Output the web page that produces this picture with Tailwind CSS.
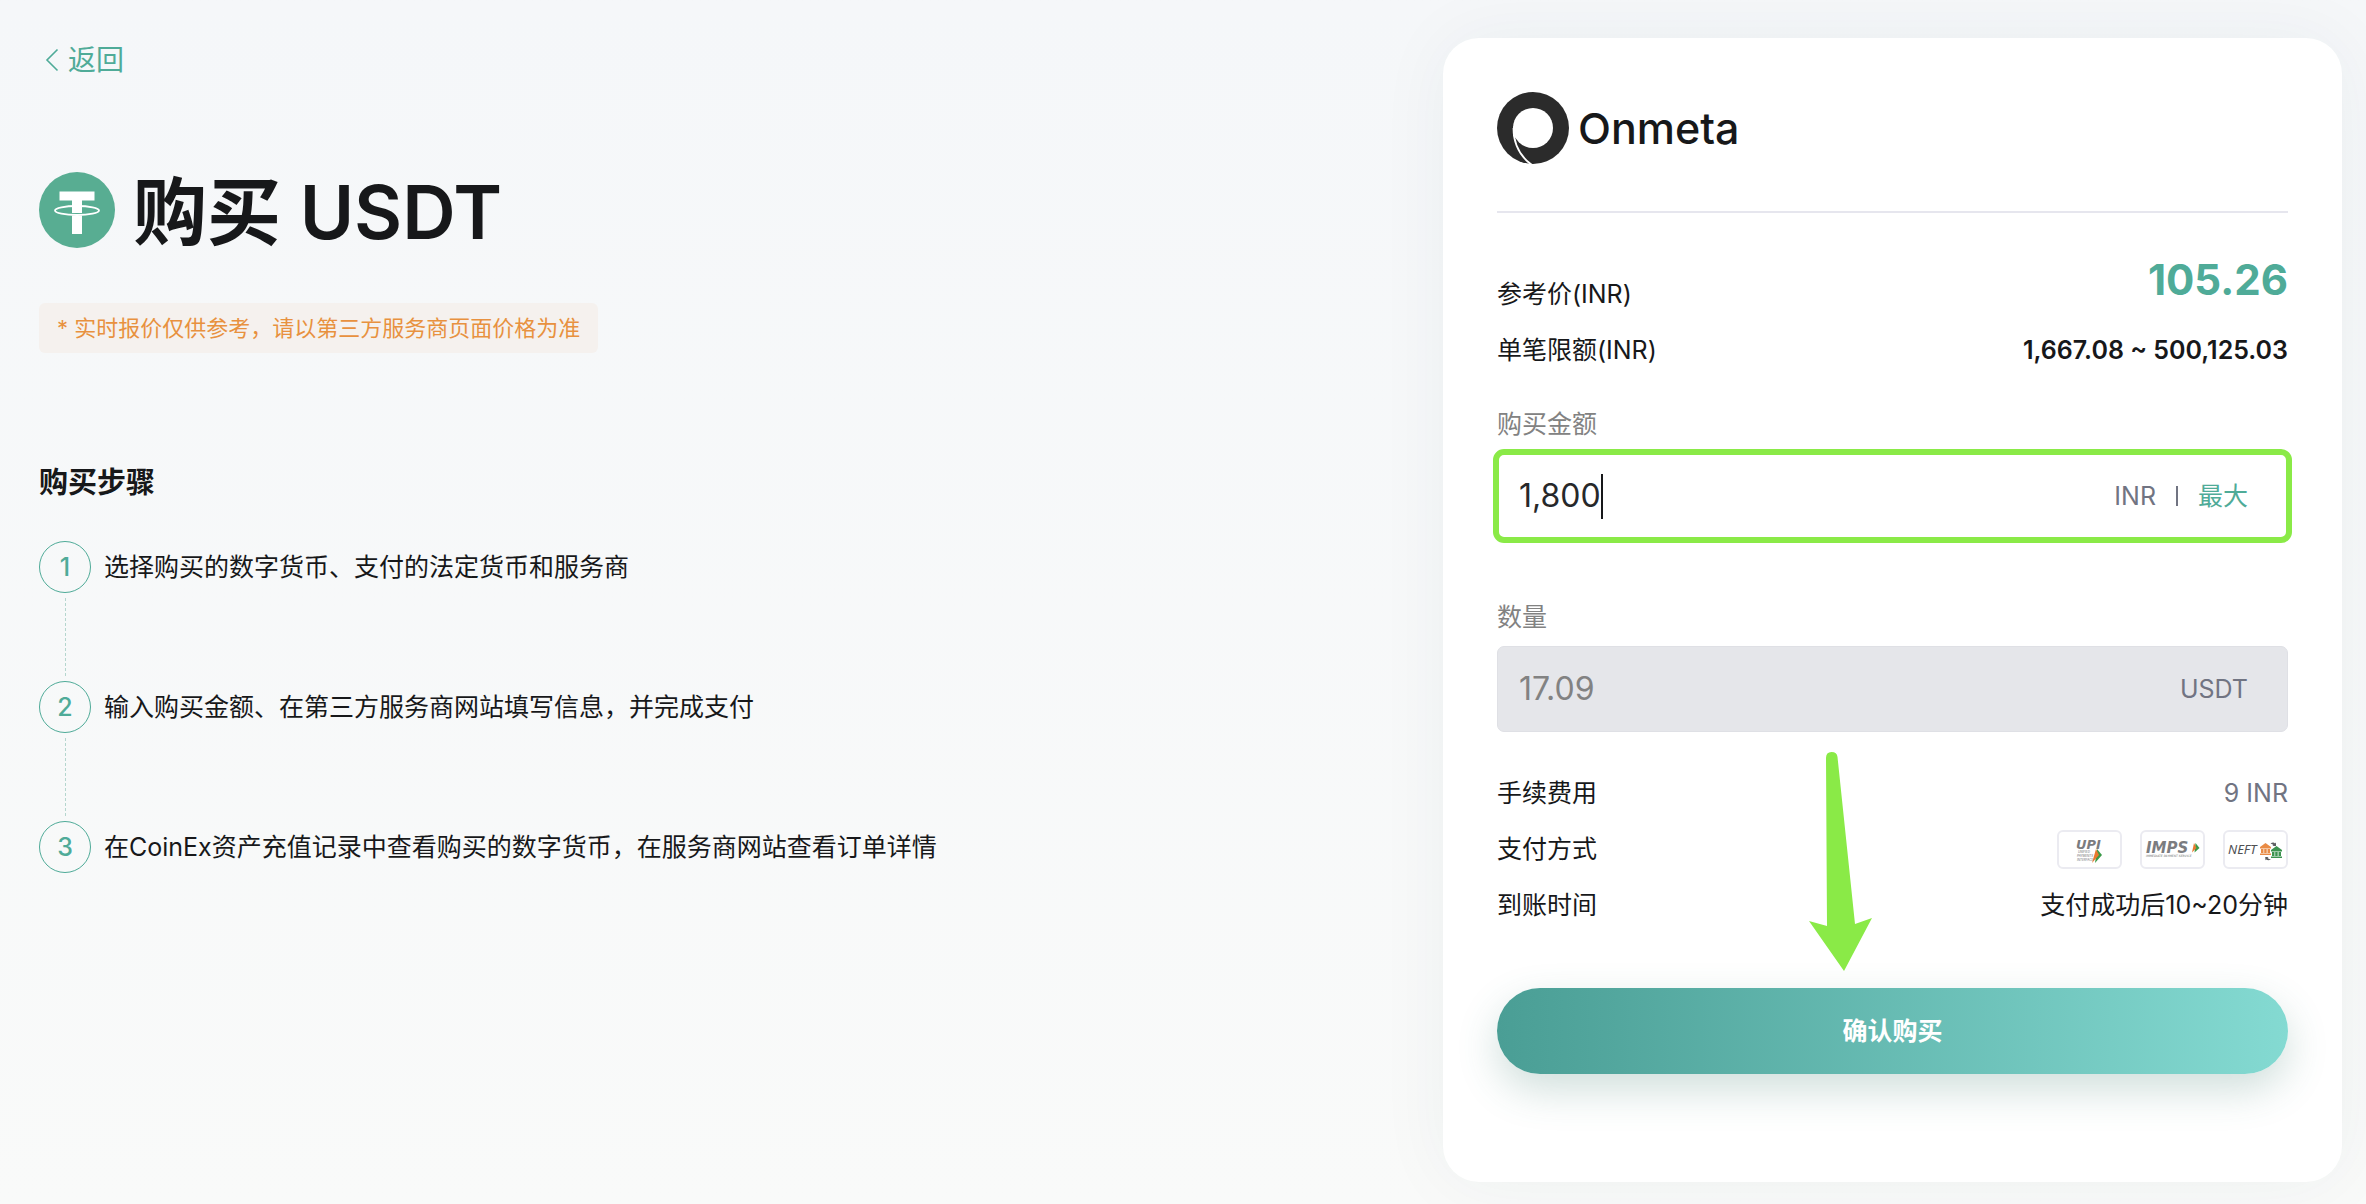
<!DOCTYPE html>
<html lang="zh-CN">
<head>
<meta charset="utf-8">
<meta name="viewport" content="width=device-width, initial-scale=1">
<title>购买 USDT</title>
<script src="https://cdn.jsdelivr.net/npm/@tailwindcss/browser@4"></script>
</head>
<body class="flex min-h-screen items-start justify-between overflow-x-hidden bg-linear-to-b from-[#f5f7f9] to-[#f9faf9] font-['Inter','Noto_Sans_CJK_SC',sans-serif] text-[25px] leading-9 text-[#17181a]">

<main class="min-w-0 flex-1 px-[39px] pt-[42px]">
  <a href="#" class="flex w-fit items-center gap-[9px] pl-[6px] text-[28px] leading-9 text-[#4fab98]">
    <svg class="h-6 w-[14px]" viewBox="0 0 14 24" fill="none" stroke="currentColor" stroke-width="1.6"><path d="M12.5 1.500 2 12l10.500 10.500"/></svg>
    返回
  </a>

  <h1 class="mt-[94px] flex h-[76px] items-center gap-[18px] text-[74px] leading-[76px] font-semibold">
    <svg class="size-[76px] shrink-0" viewBox="0 0 76 76" aria-hidden="true">
      <circle cx="38" cy="38" r="38" fill="#58ad92"/>
      <path d="M20.500 19.500h35v9H43v12.500h-10V28.500H20.500zM33 43.500h10V62H33z" fill="#fff"/>
      <ellipse cx="38" cy="38.500" rx="22" ry="4.500" fill="none" stroke="#fff" stroke-width="1.800"/>
      <path d="M33 30h10v10.500H33z" fill="#fff"/>
    </svg>
    <span class="pt-1">购买 USDT</span>
  </h1>

  <p class="mt-[55px] w-fit rounded-md bg-[#f5f1ee] px-[18px] text-[22px] leading-[50px] text-[#e8913f]">* 实时报价仅供参考，请以第三方服务商页面价格为准</p>

  <h2 class="mt-[110px] text-[29px] leading-10 font-bold">购买步骤</h2>
  <ol class="mt-[38px]">
    <li class="flex gap-[13px]">
      <div class="flex flex-col items-center">
        <span class="flex size-[52px] items-center justify-center rounded-full border border-[#4fab98] font-medium text-[#4fab98]">1</span>
        <i class="my-[5px] h-[78px] border-l border-dashed border-[#b5d6ce]"></i>
      </div>
      <span class="leading-[52px]">选择购买的数字货币、支付的法定货币和服务商</span>
    </li>
    <li class="flex gap-[13px]">
      <div class="flex flex-col items-center">
        <span class="flex size-[52px] items-center justify-center rounded-full border border-[#4fab98] font-medium text-[#4fab98]">2</span>
        <i class="my-[5px] h-[78px] border-l border-dashed border-[#b5d6ce]"></i>
      </div>
      <span class="leading-[52px]">输入购买金额、在第三方服务商网站填写信息，并完成支付</span>
    </li>
    <li class="flex gap-[13px]">
      <div class="flex flex-col items-center">
        <span class="flex size-[52px] items-center justify-center rounded-full border border-[#4fab98] font-medium text-[#4fab98]">3</span>
      </div>
      <span class="leading-[52px]">在CoinEx资产充值记录中查看购买的数字货币，在服务商网站查看订单详情</span>
    </li>
  </ol>
</main>

<section class="relative mt-[38px] mr-6 mb-[22px] w-[38%] shrink-0 rounded-[36px] bg-white px-[54px] pt-[54px] pb-[108px] shadow-[0_0_72px_rgba(40,50,70,0.05)]">
  <header class="flex items-center gap-[9px] border-b-2 border-[#e6e6ee] pb-[47px]">
    <svg class="size-[72px]" viewBox="0 0 72 72" aria-hidden="true">
      <circle cx="36" cy="36" r="36" fill="#2b2b2b"/>
      <circle cx="36" cy="36" r="20" fill="#fff"/>
      <path d="M16.500 36c0 15 6 28 18.500 37" fill="none" stroke="#fff" stroke-width="1.800"/>
      <path d="M16 34v10l4 3v-10z" fill="#fff"/>
    </svg>
    <span class="text-[43px] leading-[72px] font-medium">Onmeta</span>
  </header>

  <div class="mt-[35px] flex items-end justify-between">
    <span>参考价(INR)</span>
    <span class="text-[42px] leading-[64px] font-bold text-[#4fab98]">105.26</span>
  </div>
  <div class="mt-5 flex items-center justify-between">
    <span>单笔限额(INR)</span>
    <span class="font-semibold">1,667.08 ~ 500,125.03</span>
  </div>

  <form>
    <label for="amount" class="mt-[38px] block text-[#828282]">购买金额</label>
    <div class="mt-[11px] flex h-[86px] items-center rounded-[7px] px-[22px] pr-10 outline-6 -outline-offset-2 outline-[#8aea47]">
      <input id="amount" type="text" value="1,800" class="field-sizing-content text-[32px] leading-[44px] text-[#27282a] outline-none">
      <i class="h-[45px] w-[2px] bg-[#17181a]"></i>
      <span class="ml-auto text-[#717482]">INR</span>
      <i class="mx-[20px] h-5 w-[2px] bg-[#717482]"></i>
      <button type="button" class="text-[#4fab98]">最大</button>
    </div>

    <label for="quantity" class="mt-[60px] block text-[#828282]">数量</label>
    <div class="mt-[11px] flex h-[86px] items-center rounded-[7px] border border-[#dfe0e5] bg-[#e5e6ea] pr-[39px] pl-[21px]">
      <input id="quantity" type="text" value="17.09" readonly class="min-w-0 flex-1 text-[32px] leading-[44px] text-[#828282] outline-none">
      <span class="text-[#717482]">USDT</span>
    </div>

    <dl class="mt-[33px]">
      <div class="flex h-14 items-center justify-between">
        <dt>手续费用</dt>
        <dd class="text-[#717482]">9 INR</dd>
      </div>
      <div class="flex h-14 items-center justify-between">
        <dt>支付方式</dt>
        <dd class="flex gap-[18px]">
          <svg class="h-[39px] w-[65px] rounded-md border-2 border-[#ebebf1]" viewBox="0 0 61 35" role="img" aria-label="UPI">
            <text x="17" y="17" font-family="DejaVu Sans" font-style="italic" font-size="13" font-weight="700" fill="#7b7c7f">UPI</text>
            <g font-family="Inter" font-style="italic" font-size="3" fill="#6d6e70"><text x="19" y="21">UNIFIED</text><text x="18" y="25">PAYMENTS</text><text x="18" y="29">INTERFACE</text></g>
            <path d="m38 17 5 6-7 8z" fill="#3a9a48"/><path d="m37 17 3 6-7 8z" fill="#e8792f"/>
          </svg>
          <svg class="h-[39px] w-[65px] rounded-md border-2 border-[#ebebf1]" viewBox="0 0 61 35" role="img" aria-label="IMPS">
            <text x="4" y="21" font-family="DejaVu Sans" font-style="italic" font-size="15" font-weight="700" fill="#7b7c7f">IMPS</text>
            <text x="4" y="25" font-family="DejaVu Sans" font-style="italic" font-size="3" fill="#6d6e70">IMMEDIATE PAYMENT SERVICE</text>
            <path d="m53.500 11 4 5-5 4.500z" fill="#3a9a48"/><path d="m52 11 2.500 5-4.500 4.500z" fill="#e8792f"/>
          </svg>
          <svg class="h-[39px] w-[65px] rounded-md border-2 border-[#ebebf1]" viewBox="0 0 61 35" role="img" aria-label="NEFT">
            <text x="3" y="22" font-family="Noto Sans" font-style="italic" font-size="13" fill="#4f5053">NEFT</text>
            <path d="m40.500 11 5.500 4v1.500H35V15zM36 17h2.500v4H36zm3.200 0h2.500v4h-2.500zm3.300 0H45v4h-2.500zM35 21.500h11V23H35z" fill="#e98b45"/>
            <path d="m51.500 14 5.500 4v1.500H46V18zM47 20h2.500v4H47zm3.200 0h2.500v4h-2.500zm3.300 0H56v4h-2.500zM46 24.500h11V26H46z" fill="#3d9350"/>
            <path d="M45.500 11.500q3-2 4.500 0l1-1V14h-3.500l1-1q-1-1-3-1.500M46 27.500q-3 1.500-4.500 0l-1 .8-.3-3.300h3.300l-1 1q1.500 1 3.500 1.500" fill="#5c5d60"/>
          </svg>
        </dd>
      </div>
      <div class="flex h-14 items-center justify-between">
        <dt>到账时间</dt>
        <dd>支付成功后10~20分钟</dd>
      </div>
    </dl>

    <button type="submit" class="mt-[55px] block h-[86px] w-full rounded-full bg-linear-to-r from-[#4a9e95] to-[#84dad2] font-bold text-white shadow-[0_16px_40px_rgba(60,120,110,0.24)]">确认购买</button>
  </form>

  <!-- Pointer towards the confirm button -->
  <svg class="absolute top-[713px] left-[366px] h-[222px] w-[64px]" viewBox="0 0 64 222" aria-hidden="true">
    <path d="M17 7q0-6 5.500-6T28.500 6L46 173l17-6-28 53L0 170l18 5z" fill="#8aea47"/>
  </svg>
</section>
</body>
</html>
